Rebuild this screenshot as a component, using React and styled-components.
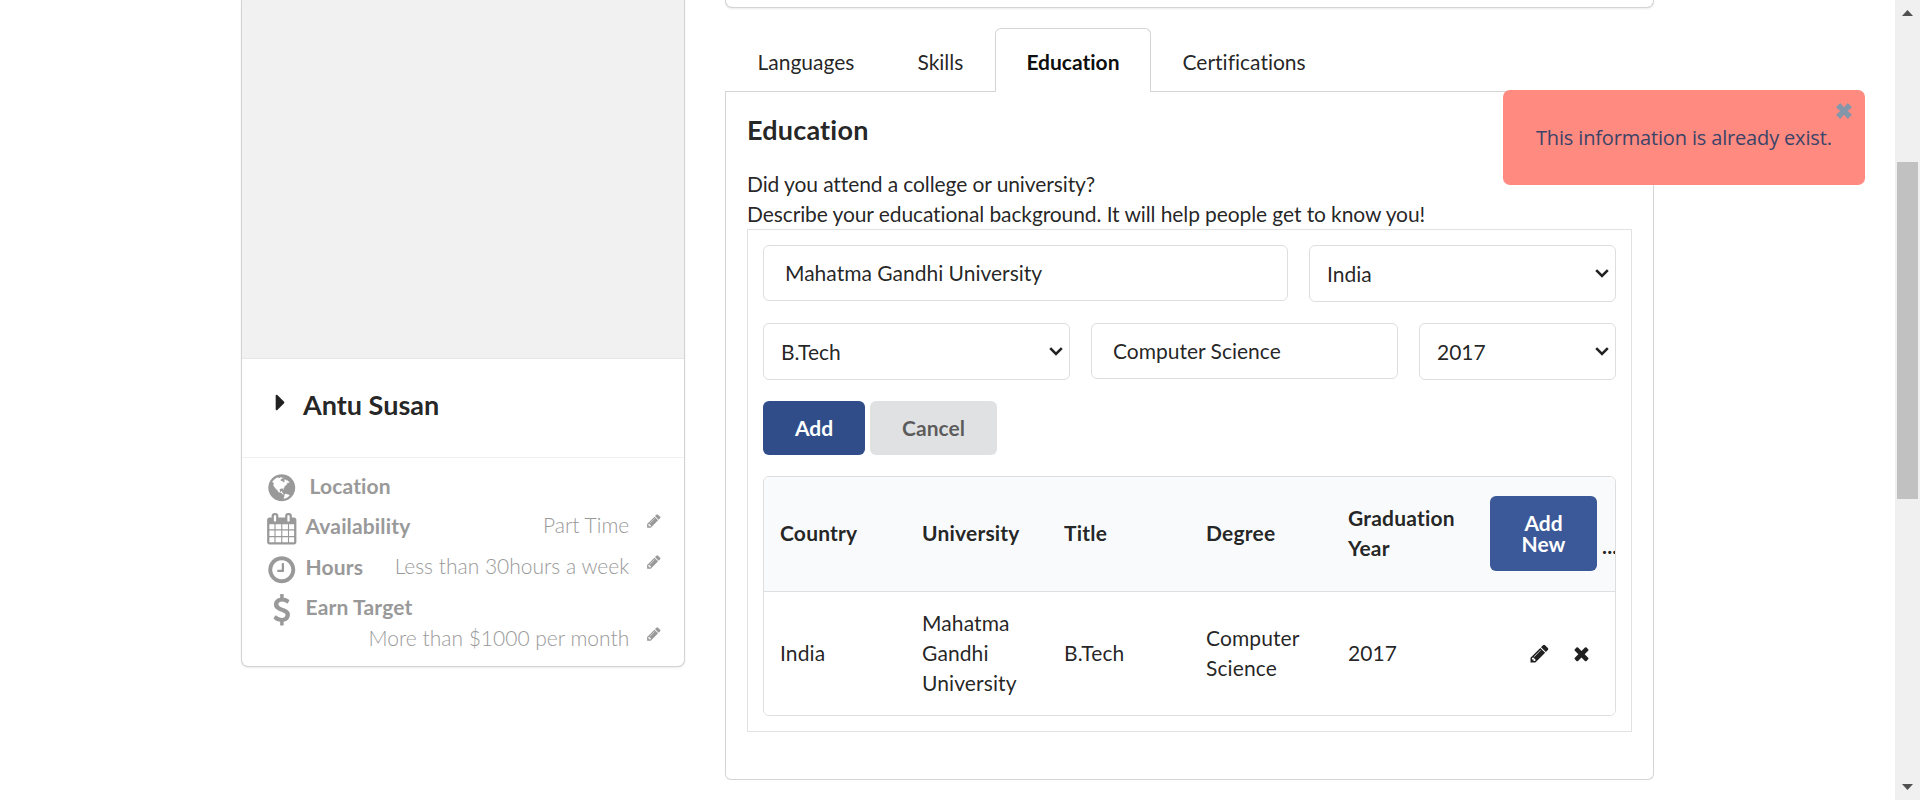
import React from "react";
import styled, { createGlobalStyle } from "styled-components";

const GlobalStyle = createGlobalStyle`
  *, *::before, *::after { box-sizing: border-box; }
  body {
    margin: 0;
    background: #fff;
    color: rgba(0, 0, 0, 0.87);
    font: 400 21px/30px Lato, "Liberation Sans", sans-serif;
    font-variant-ligatures: none;
    overflow: hidden;
  }
  button, input { font-family: inherit; }
`;

const PATHS = {
  caret: "M1152 896q0 26-19 45l-448 448q-19 19-45 19t-45-19-19-45v-896q0-26 19-45t45-19 45 19l448 448q19 19 19 45z",
  pencil:
    "M491 1536l91-91-235-235-91 91v107h128v128h107zm523-928q0-22-22-22-10 0-17 7l-542 542q-7 7-7 17 0 22 22 22 10 0 17-7l542-542q7-7 7-17zm-54-192l416 416-832 832h-416v-416zm683 96q0 53-37 90l-166 166-416-416 166-165q36-38 90-38 53 0 91 38l235 234q37 39 37 91z",
  times:
    "M1490 1322q0 40-28 68l-136 136q-28 28-68 28t-68-28l-294-294-294 294q-28 28-68 28t-68-28l-136-136q-28-28-28-68t28-68l294-294-294-294q-28-28-28-68t28-68l136-136q28-28 68-28t68 28l294 294 294-294q28-28 68-28t68 28l136 136q28 28 28 68t-28 68l-294 294 294 294q28 28 28 68z",
  clock:
    "M1024 544v448q0 14-9 23t-23 9h-320q-14 0-23-9t-9-23v-64q0-14 9-23t23-9h224v-352q0-14 9-23t23-9h64q14 0 23 9t9 23zm416 352q0-148-73-273t-198-198-273-73-273 73-198 198-73 273 73 273 198 198 273 73 273-73 198-198 73-273zm224 0q0 209-103 385.5t-279.5 279.5-385.5 103-385.5-103-279.5-279.5-103-385.5 103-385.5 279.5-279.5 385.5-103 385.5 103 279.5 279.5 103 385.5z",
  calendar:
    "M192 1664h288v-288h-288v288zm352 0h320v-288h-320v288zm-352-352h288v-320h-288v320zm352 0h320v-320h-320v320zm-352-384h288v-288h-288v288zm736 736h320v-288h-320v288zm-384-736h320v-288h-320v288zm768 736h288v-288h-288v288zm-384-352h320v-320h-320v320zm-352-864v-288q0-13-9.5-22.5t-22.5-9.5h-64q-13 0-22.5 9.5t-9.5 22.5v288q0 13 9.5 22.5t22.5 9.5h64q13 0 22.5-9.5t9.5-22.5zm736 864h288v-320h-288v320zm-384-384h320v-288h-320v288zm384 0h288v-288h-288v288zm32-480v-288q0-13-9.5-22.5t-22.5-9.5h-64q-13 0-22.5 9.5t-9.5 22.5v288q0 13 9.5 22.5t22.5 9.5h64q13 0 22.5-9.5t9.5-22.5zm384-64v1280q0 52-38 90t-90 38h-1408q-52 0-90-38t-38-90v-1280q0-52 38-90t90-38h128v-96q0-66 47-113t113-47h64q66 0 113 47t47 113v96h384v-96q0-66 47-113t113-47h64q66 0 113 47t47 113v96h128q52 0 90 38t38 90z",
  dollar:
    "M1362 1185q0 153-99.5 263.5t-258.5 136.5v175q0 14-9 23t-23 9h-135q-13 0-22.5-9.5t-9.5-22.5v-175q-66-9-127.5-31t-101.5-44.5-74-48-46.5-37.5-17.5-18q-17-21-2-41l103-135q7-10 23-12 15-2 24 9l2 2q113 99 243 125 37 8 74 8 81 0 142.5-43t61.5-122q0-28-15-53t-33.5-42-58.5-37.5-66-32-80-32.5q-39-16-61.5-25t-61.5-26.5-62.5-31-56.5-35.5-53.5-42.5-43.5-49-35.5-58-21-66.5-8.5-78q0-138 98-242t255-134v-180q0-13 9.5-22.5t22.5-9.5h135q14 0 23 9t9 23v176q57 6 110.5 23t87 33.5 63.5 37.5 39 29 15 14q17 18 5 38l-81 146q-8 15-23 16-14 3-27-7-3-3-14.5-12t-39-26.5-58.5-32-74.5-26-85.5-11.5q-95 0-155 43t-60 111q0 26 8.5 48t29.5 41.5 39.5 33 56 31 60.5 27 70 27.5q53 20 81 31.5t76 35 75.5 42.5 62 50 53 63.5 31.5 76.5 13 94z",
  globe:
    "M896 128q209 0 385.5 103t279.5 279.5 103 385.5-103 385.5-279.5 279.5-385.5 103-385.5-103-279.5-279.5-103-385.5 103-385.5 279.5-279.5 385.5-103zm274 521q-2 1-9.5 9.5t-13.5 9.5q2 0 4.5-5t5-11 3.5-7q6-7 22-15 14-6 52-12 34-8 51 11-2-2 9.5-13t14.5-12q3-2 15-4.5t15-7.5l2-22q-12 1-17.5-7t-6.5-21q0 2-6 8 0-7-4.5-8t-11.5 1-9 1q-10-3-15-7.5t-8-16.5-4-15q-2-5-9.5-11t-9.5-10q-1-2-2.5-5.5t-3-6.5-4-5.5-5.5-2.5-7 5-7.5 10-4.5 5q-3-2-6-1.5t-4.5 1-4.5 3-5 3.5q-3 2-8.5 3t-8.5 2q15-5-1-11-10-4-16-3 9-4 7.5-12t-8.5-14h5q-1-4-8.5-8.5t-17.5-8.5-13-6q-8-5-34-9.5t-33-.5q-5 6-4.5 10.5t4 14 3.5 12.5q1 6-5.5 13t-6.5 12q0 7 14 15.5t10 21.5q-3 8-16 16t-16 12q-5 8-1.5 18.5t10.5 16.5q2 2 1.5 4t-3.5 4.5-5.5 4-6.5 3.5l-3 2q-11 5-20.5-6t-13.5-26q-7-25-16-30-23-8-29 1-5-13-41-26-25-9-58-4 6-1 0-15-7-15-19-12 3-6 4-17.5t1-13.5q3-13 12-23 1-1 7-8.5t9.5-13.5.5-6q35 4 50-11 5-5 11.5-17t10.5-17q9-6 14-5.5t14.5 5.5 14.5 5q14 1 15.5-11t-7.5-20q12 1 3-17-4-7-8-9-12-4-27 5-8 4 2 8-1-1-9.5 10.5t-16.5 17.5-16-5q-1-1-5.5-13.5t-9.5-13.5q-8 0-16 15 3-8-11-15t-24-8q19-12-8-27-7-4-20.5-5t-19.5 4q-5 7-5.5 11.5t5 8 10.5 5.5 11.5 4 8.5 3q14 10 8 14-2 1-8.5 3.5t-11.5 4.5-6 4q-3 4 0 14t-2 14q-5-5-9-17.5t-7-16.5q7 9-25 6l-10-1q-4 0-16 2t-20.5 1-13.5-8q-4-8 0-20 1-4 4-2-4-3-11-9.5t-10-8.5q-46 15-94 41 6 1 12-1 5-2 13-6.5t10-5.5q34-14 42-7l5-5q14 16 20 25-7-4-30-1-20 6-22 12 7 12 5 18-4-3-11.5-10t-14.5-11-15-5q-16 0-22 1-146 80-235 222 7 7 12 8 4 1 5 9t2.5 11 11.5-3q9 8 3 19 1-1 44 27 19 17 21 21 3 11-10 18-1-2-9-9t-9-4q-3 5 .5 18.5t10.5 12.5q-7 0-9.5 16t-2.5 35.5-1 23.5l2 1q-3 12 5.5 34.5t21.5 19.5q-13 3 20 43 6 8 8 9 3 2 12 7.5t15 10 10 10.5q4 5 10 22.5t14 23.5q-2 6 9.5 20t10.5 23q-1 0-2.5 1t-2.5 1q3 7 15.5 14t15.5 13q1 3 2 10t3 11 8 2q2-20-24-62-15-25-17-29-3-5-5.5-15.5t-4.5-14.5q2 0 6 1.5t8.5 3.5 7.5 4 2 3q-3 7 2 17.5t12 18.5 17 19 12 13q6 6 14 19.5t0 13.5q9 0 20 10t17 20q5 8 8 26t5 24q2 7 8.5 13.5t12.5 9.5l16 8 13 7q5 2 18.5 10.5t21.5 11.5q10 4 16 4t14.5-2.5 13.5-3.5q15-2 29 15t21 21q36 19 55 11-2 1 .5 7.5t8 15.5 9 14.5 5.5 8.5q5 6 18 15t18 15q6-4 7-9-3 8 7 20t18 10q14-3 14-32-31 15-49-18 0-1-2.5-5.5t-4-8.5-2.5-8.5 0-7.5 5-3q9 0 10-3.5t-2-12.5-4-13q-1-8-11-20t-12-15q-5 9-16 8t-16-9q0 1-1.5 5.5t-1.5 6.5q-13 0-15-1 1-3 2.5-17.5t3.5-22.5q1-4 5.5-12t7.5-14.5 4-12.5-4.5-9.5-17.5-2.5q-19 1-26 20-1 3-3 10.5t-5 11.5-9 7q-7 3-24 2t-24-5q-13-8-22.5-29t-9.5-37q0-10 2.5-26.5t3-25-5.5-24.5q3-2 9-9.5t10-10.5q2-1 4.5-1.5t4.5 0 4-1.5 3-6q-1-1-4-3-3-3-4-3 7 3 28.5-1.5t27.5 1.5q15 11 22-2 0-1-2.5-9.5t-.5-13.5q5 27 29 9 3 3 15.5 5t17.5 5q3 2 7 5.5t5.5 4.5 5-.5 8.5-6.5q10 14 12 24 11 40 19 44 7 3 11 2t4.5-9.5 0-14-1.5-12.5l-1-8v-18l-1-8q-15-3-18.5-12t1.5-18.5 15-18.5q1-1 8-3.5t15.5-6.5 12.5-8q21-19 15-35 7 0 11-9-1 0-5-3t-7.5-5-4.5-2q9-5 2-16 5-3 7.5-11t7.5-10q9 12 21 2 7-8 1-16 5-7 20.5-10.5t18.5-9.5q7 2 8-2t1-12 3-12q4-5 15-9t13-5l17-11q3-4 0-4 18 2 31-11 10-11-6-20 3-6-3-9.5t-15-5.5q3-1 11.5-.5t10.5-1.5q15-10-7-16-17-5-43 12zm-163 877q206-36 351-189-3-3-12.5-4.5t-12.5-3.5q-18-7-24-8 1-7-2.5-13t-8-9-12.5-8-11-7q-2-2-7-6t-7-5.5-7.5-4.5-8.5-2-10 1l-3 1q-3 1-5.5 2.5t-5.5 3-4 3 0 2.5q-21-17-36-22-5-1-11-5.5t-10.5-7-10-1.5-11.5 7q-5 5-6 15t-2 13q-7-5 0-17.5t2-18.5q-3-6-10.5-4.5t-12 4.5-11.5 8.5-9 6.5-8.5 5.5-8.5 7.5q-3 4-6 12t-5 11q-2-4-11.5-6.5t-9.5-5.5q2 10 4 35t5 38q7 31-12 48-27 25-29 40-4 22 12 26 0 7-8 20.5t-7 21.5q0 6 2 16z",
};

const Glyph = styled.svg`
  display: block;
  flex: none;
  width: ${(p) => p.$size}px;
  height: ${(p) => p.$size}px;
  fill: currentColor;
  overflow: visible;
`;

const Icon = ({ name, size }) => (
  <Glyph $size={size} viewBox="0 0 1792 1792" aria-hidden="true">
    <path d={PATHS[name]} />
  </Glyph>
);

const Page = styled.div`
  position: relative;
  display: flex;
  height: 800px;
  overflow: hidden;
`;

const Content = styled.main`
  flex: 1;
  display: flex;
  align-items: flex-start;
  gap: 41px;
  padding-left: 242px;
`;

/* Profile card */
const Card = styled.aside`
  width: 442px;
  height: 666px;
  border-radius: 0 0 6px 6px;
  box-shadow: 0 0 0 1px #d4d4d5, 0 1px 3px 0 #d4d4d5;
`;

const Photo = styled.div`
  height: 359px;
  background: #f1f1f1;
  border-bottom: 1px solid #e6e6e6;
`;

const NameRow = styled.div`
  display: flex;
  align-items: center;
  height: 99px;
  padding: 0 0 7px 25px;
  border-bottom: 1px solid #f0f0f0;
  font-size: 27px;
  font-weight: 700;

  svg { margin: -4px 9px 0 0; }
`;

const Details = styled.div`
  padding: 9px 22px 0 24px;
  color: #999;
`;

const DetailRow = styled.div`
  display: flex;
  align-items: center;
  height: ${(p) => p.$height}px;

  & > svg { margin-right: ${(p) => (p.$wide ? 12 : 8)}px; }
`;

const DetailLabel = styled.span`
  margin-top: ${(p) => (p.$low ? -3 : -5)}px;
  font-weight: 700;
  letter-spacing: 0.15px;
`;

const DetailValue = styled.span`
  display: flex;
  align-items: center;
  gap: 17px;
  margin: -7px 0 0 auto;
  font-weight: 300;

  svg { margin-top: -9px; }
`;

/* Main column */
const Column = styled.section`
  width: 929px;
`;

const PanelEnd = styled.div`
  height: 7px;
  margin: 0 1px;
  border-radius: 0 0 6px 6px;
  box-shadow: 0 0 0 1px #d4d4d5, 0 1px 3px 0 #d4d4d5;
`;

const Tabs = styled.nav`
  display: flex;
  margin-top: 21px;
  padding-left: 1px;
  height: 64px;
  border-bottom: 1px solid #d4d4d5;
`;

const Tab = styled.a`
  display: flex;
  align-items: center;
  height: 64px;
  padding: 2px 30.5px 0;
  border: 1px solid ${(p) => (p.$active ? "#d4d4d5" : "transparent")};
  border-bottom: 0;
  border-radius: 6px 6px 0 0;
  background: ${(p) => (p.$active ? "#fff" : "none")};
  color: ${(p) => (p.$active ? "rgba(0,0,0,.95)" : "inherit")};
  font-weight: ${(p) => (p.$active ? 700 : 400)};
`;

const Segment = styled.div`
  height: 688px;
  padding: 22px 21px 0;
  border: 1px solid #d4d4d5;
  border-top: 0;
  border-radius: 0 0 6px 6px;
`;

const Heading = styled.h3`
  margin: 0 0 23px;
  font-size: 27px;
  line-height: 32px;
  font-weight: 700;
  letter-spacing: 0.2px;
`;

const Intro = styled.p`
  margin: 0;
  letter-spacing: -0.1px;
`;

const FormBox = styled.div`
  height: 503px;
  padding: 15px;
  border: 1px solid #e2e2e3;
`;

const Fields = styled.div`
  display: grid;
  grid-template-columns: ${(p) => p.$columns};
  gap: 21px;
  align-items: start;
  height: 78px;
`;

const TextInput = styled.input`
  width: 100%;
  height: 56px;
  padding: 0 21px 1px;
  border: 1px solid #dededf;
  border-radius: 6px;
  background: #fff;
  color: rgba(0, 0, 0, 0.87);
  font-size: 21px;
`;

const SelectBox = styled.div`
  display: flex;
  align-items: center;
  justify-content: space-between;
  height: 57px;
  padding: 0 6px 0 17px;
  border: 1px solid #dededf;
  border-radius: 6px;
`;

const Chevron = styled.svg`
  width: 14px;
  height: 9px;
  margin-top: -1px;
  fill: none;
  stroke: #222;
  stroke-width: 2.6;
`;

const Actions = styled.div`
  display: flex;
  gap: 5px;
`;

const Button = styled.button`
  flex: none;
  width: ${(p) => p.$width}px;
  height: ${(p) => p.$height || 54}px;
  padding: 0 0 1px;
  border: 0;
  border-radius: 6px;
  background: ${(p) => p.$background};
  color: ${(p) => p.$color || "#fff"};
  font-size: 21px;
  line-height: 21px;
  font-weight: 700;
`;

const Table = styled.div`
  margin-top: 21px;
  border: 1px solid #dededf;
  border-radius: 6px;
  overflow: hidden;
`;

const Row = styled.div`
  display: grid;
  grid-template-columns: repeat(6, 142px);
  align-items: center;
  height: ${(p) => p.$height}px;
  background: ${(p) => (p.$head ? "#f9fafb" : "#fff")};
  border-bottom: ${(p) => (p.$head ? "1px solid #dfe0e1" : "0")};
  font-weight: ${(p) => (p.$head ? 700 : 400)};
  letter-spacing: ${(p) => (p.$head ? 0.2 : 0.1)}px;
`;

const Cell = styled.div`
  padding: 0 14px 2px 16px;
`;

const AddCell = styled.div`
  display: flex;
  align-items: center;
  gap: 5px;
  padding: 0 0 1px 16px;
  overflow: hidden;
`;

const Overflow = styled.span`
  margin-top: 25px;
`;

const RowActions = styled.div`
  display: flex;
  gap: 21px;
  padding: 0 0 1px 55px;
`;

/* Notification */
const Toast = styled.div`
  position: absolute;
  top: 90px;
  left: 1503px;
  width: 362px;
  height: 95px;
  padding: 33px 0 0 33px;
  border-radius: 7px;
  background: #ff8a80;
  color: #3a4468;
  font-family: "Open Sans", "Noto Sans", sans-serif;
  font-size: 20px;
  letter-spacing: -0.16px;
  white-space: nowrap;
`;

const ToastClose = styled.svg`
  position: absolute;
  top: 13px;
  right: 13px;
  width: 16px;
  height: 16px;
  fill: #8496a9;
`;

/* Page scrollbar */
const ScrollTrack = styled.div`
  display: flex;
  flex-direction: column;
  align-items: center;
  width: 25px;
  padding: 10px 0;
  background: #f0f0f0;
`;

const ScrollArrow = styled.svg`
  width: 11px;
  height: 6px;
  fill: #505050;
`;

const ScrollThumb = styled.div`
  width: 21px;
  height: 337px;
  margin: 146px 0 auto;
  background: #c1c1c1;
`;

const Select = ({ children }) => (
  <SelectBox>
    {children}
    <Chevron viewBox="0 0 14 9">
      <path d="M1.2 1.2L7 7L12.8 1.2" />
    </Chevron>
  </SelectBox>
);

const Value = ({ children }) => (
  <DetailValue>
    {children}
    <Icon name="pencil" size={15.75} />
  </DetailValue>
);

const TABS = ["Languages", "Skills", "Education", "Certifications"];
const HEADERS = ["Country", "University", "Title", "Degree", "Graduation Year"];
const RECORD = ["India", "Mahatma Gandhi University", "B.Tech", "Computer Science", "2017"];

export default function App() {
  return (
    <Page>
      <GlobalStyle />
      <Content>
        <Card>
          <Photo />
          <NameRow>
            <Icon name="caret" size={27} />
            Antu Susan
          </NameRow>
          <Details>
            <DetailRow $height={41} $wide>
              <Icon name="globe" size={31.5} />
              <DetailLabel $low>Location</DetailLabel>
            </DetailRow>
            <DetailRow $height={41}>
              <Icon name="calendar" size={31.5} />
              <DetailLabel>Availability</DetailLabel>
              <Value>Part Time</Value>
            </DetailRow>
            <DetailRow $height={41}>
              <Icon name="clock" size={31.5} />
              <DetailLabel>Hours</DetailLabel>
              <Value>Less than 30hours a week</Value>
            </DetailRow>
            <DetailRow $height={39}>
              <Icon name="dollar" size={31.5} />
              <DetailLabel>Earn Target</DetailLabel>
            </DetailRow>
            <DetailRow $height={25}>
              <Value>More than $1000 per month</Value>
            </DetailRow>
          </Details>
        </Card>

        <Column>
          <PanelEnd />
          <Tabs>
            {TABS.map((tab) => (
              <Tab key={tab} $active={tab === "Education"}>{tab}</Tab>
            ))}
          </Tabs>
          <Segment>
            <Heading>Education</Heading>
            <Intro>
              Did you attend a college or university?
              <br />
              Describe your educational background. It will help people get to know you!
            </Intro>
            <FormBox>
              <Fields $columns="525px 307px">
                <TextInput readOnly value="Mahatma Gandhi University" />
                <Select>India</Select>
              </Fields>
              <Fields $columns="307px 307px 197px">
                <Select>B.Tech</Select>
                <TextInput readOnly value="Computer Science" />
                <Select>2017</Select>
              </Fields>
              <Actions>
                <Button $width={102} $background="#304d8a">Add</Button>
                <Button $width={127} $background="#e0e1e2" $color="rgba(0,0,0,.6)">Cancel</Button>
              </Actions>
              <Table>
                <Row $head $height={115}>
                  {HEADERS.map((text) => <Cell key={text}>{text}</Cell>)}
                  <AddCell>
                    <Button $width={107} $height={75} $background="#3b5998">
                      Add
                      <br />
                      New
                    </Button>
                    <Overflow>...</Overflow>
                  </AddCell>
                </Row>
                <Row $height={123}>
                  {RECORD.map((text) => <Cell key={text}>{text}</Cell>)}
                  <RowActions>
                    <Icon name="pencil" size={21} />
                    <Icon name="times" size={21} />
                  </RowActions>
                </Row>
              </Table>
            </FormBox>
          </Segment>
        </Column>
      </Content>

      <ScrollTrack>
        <ScrollArrow viewBox="0 0 11 6"><path d="M5.5 0L11 6H0z" /></ScrollArrow>
        <ScrollThumb />
        <ScrollArrow viewBox="0 0 11 6"><path d="M0 0H11L5.5 6z" /></ScrollArrow>
      </ScrollTrack>

      <Toast role="alert">
        This information is already exist.
        <ToastClose viewBox="0 0 16 16">
          <path d="M4.2 0L8 4.2L11.8 0L16 4.2L11.8 8L16 11.8L11.8 16L8 11.8L4.2 16L0 11.8L4.2 8L0 4.2z" />
        </ToastClose>
      </Toast>
    </Page>
  );
}
